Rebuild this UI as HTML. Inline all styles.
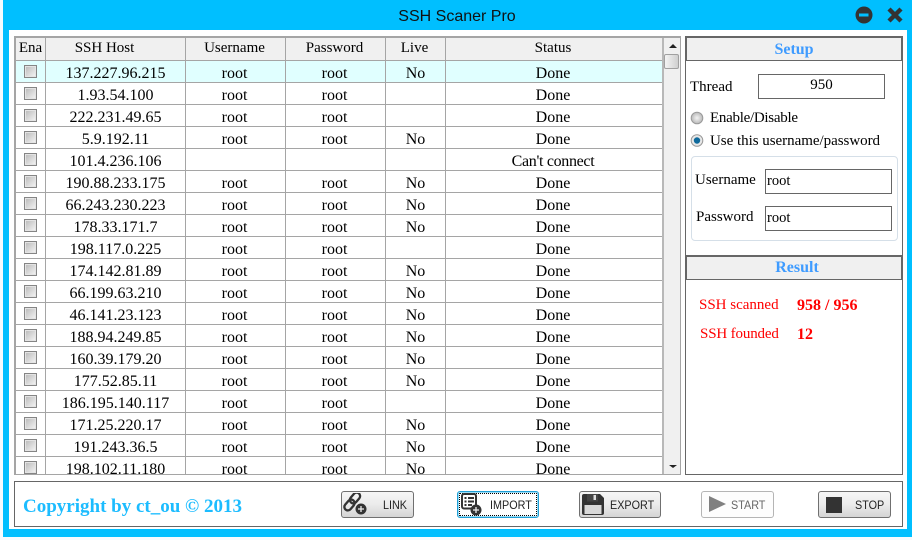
<!DOCTYPE html>
<html><head><meta charset="utf-8"><style>
html,body{margin:0;padding:0;width:912px;height:540px;overflow:hidden;background:#f4fbff}
*{box-sizing:border-box}
body{font-family:"Liberation Serif",serif;font-size:14px;color:#000;position:relative}
.a{position:absolute}
.t{position:absolute;white-space:nowrap;line-height:16px}
.c{text-align:center}
#win{left:3px;top:0;width:909px;height:537px;background:#00bfff}
#in{left:9px;top:30px;width:898px;height:499px;background:#fff}
.cell{position:absolute;text-align:center;line-height:16px;white-space:nowrap;overflow:hidden}
.r{position:absolute;left:0;width:665px;height:16px;font-size:16px}
.r div{position:absolute;top:0;height:16px;text-align:center;line-height:16px;white-space:nowrap}
.r .x{left:24px;width:13px;height:13px;border:1px solid #858585;background:linear-gradient(135deg,#b8b8b8,#f6f6f6);box-shadow:inset 0 0 0 1px #e4e4e4}
.h{left:46px;width:139px}.u{left:185px;width:99px}.p{left:285px;width:99px}.l{left:386px;width:59px}.s{left:446px;width:214px}
.hl{position:absolute;left:16px;width:646px;height:1px;background:#a5a5a5}
.vl{position:absolute;top:38px;width:1px;height:436px;background:#a5a5a5}
.btn{position:absolute;top:491px;height:27px;border:1px solid #707070;border-radius:3px;background:linear-gradient(#f6f6f6,#ebebeb 50%,#d4d4d4);font:12px "Liberation Sans",sans-serif;color:#222;line-height:25px}
.btn .t{transform:scaleX(.9);transform-origin:0 0}
</style></head><body>
<div class="a" id="win"></div><div class="a" id="in"></div>
<div class="t c" style="left:1px;width:912px;top:8px;font:16px/18px 'Liberation Sans',sans-serif;color:#111">SSH Scaner Pro</div>
<svg class="a" style="left:855px;top:6px" width="50" height="18" viewBox="0 0 50 18"><circle cx="9" cy="9" r="8.5" fill="#333"/><rect x="4" y="7.5" width="9.5" height="3" fill="#00bfff"/><path d="M34 3L46 15M46 3L34 15" stroke="#333" stroke-width="4.4"/></svg>

<!-- table -->
<div class="a" style="left:14px;top:36px;width:667px;height:439px;border:2px solid #a5a5a5;border-right:1px solid #a5a5a5;border-bottom:1px solid #a5a5a5"></div>
<div class="a" style="left:16px;top:38px;width:646px;height:22px;background:#f0f0f0"></div>
<div class="a" style="left:16px;top:61px;width:646px;height:21px;background:#e0ffff"></div>
<div class="a" style="left:664px;top:38px;width:16px;height:436px;background:#f0f0f0"></div>
<div class="a" style="left:664px;top:54px;width:15px;height:15px;border:1px solid #a0a0a0;border-radius:2px;background:linear-gradient(90deg,#f4f4f4,#cfcfcf)"></div>
<div class="a" style="left:669px;top:44px;border:4px solid transparent;border-top:0;border-bottom:4px solid #222"></div>
<div class="a" style="left:669px;top:465px;border:4px solid transparent;border-bottom:0;border-top:3px solid #222"></div>
<div class="a" style="left:662px;top:38px;width:2px;height:436px;background:#b8b8b8"></div>
<div class="vl" style="left:45px"></div><div class="vl" style="left:185px"></div><div class="vl" style="left:285px"></div><div class="vl" style="left:385px"></div><div class="vl" style="left:445px"></div>
<div class="hl" style="top:60px"></div><div class="hl" style="top:82px"></div><div class="hl" style="top:104px"></div><div class="hl" style="top:126px"></div><div class="hl" style="top:148px"></div><div class="hl" style="top:170px"></div><div class="hl" style="top:192px"></div><div class="hl" style="top:214px"></div><div class="hl" style="top:236px"></div><div class="hl" style="top:258px"></div><div class="hl" style="top:280px"></div><div class="hl" style="top:302px"></div><div class="hl" style="top:324px"></div><div class="hl" style="top:346px"></div><div class="hl" style="top:368px"></div><div class="hl" style="top:390px"></div><div class="hl" style="top:412px"></div><div class="hl" style="top:434px"></div><div class="hl" style="top:456px"></div>

<div style="font-size:15px">
<div class="cell" style="left:16px;width:29px;top:40px">Ena</div><div class="cell" style="left:46px;width:117px;top:40px">SSH Host</div><div class="cell" style="left:185px;width:99px;top:40px">Username</div><div class="cell" style="left:285px;width:99px;top:40px">Password</div><div class="cell" style="left:385px;width:59px;top:40px">Live</div><div class="cell" style="left:446px;width:214px;top:40px">Status</div>
</div>

<div class="r" style="top:66px"><div class="x" style="top:-1px"></div><div class="h">137.227.96.215</div><div class="u">root</div><div class="p">root</div><div class="l">No</div><div class="s">Done</div></div>
<div class="r" style="top:88px"><div class="x" style="top:-1px"></div><div class="h">1.93.54.100</div><div class="u">root</div><div class="p">root</div><div class="s">Done</div></div>
<div class="r" style="top:110px"><div class="x" style="top:-1px"></div><div class="h">222.231.49.65</div><div class="u">root</div><div class="p">root</div><div class="s">Done</div></div>
<div class="r" style="top:132px"><div class="x" style="top:-1px"></div><div class="h">5.9.192.11</div><div class="u">root</div><div class="p">root</div><div class="l">No</div><div class="s">Done</div></div>
<div class="r" style="top:154px"><div class="x" style="top:-1px"></div><div class="h">101.4.236.106</div><div class="s" style="letter-spacing:-.32px">Can't connect</div></div>
<div class="r" style="top:176px"><div class="x" style="top:-1px"></div><div class="h">190.88.233.175</div><div class="u">root</div><div class="p">root</div><div class="l">No</div><div class="s">Done</div></div>
<div class="r" style="top:198px"><div class="x" style="top:-1px"></div><div class="h">66.243.230.223</div><div class="u">root</div><div class="p">root</div><div class="l">No</div><div class="s">Done</div></div>
<div class="r" style="top:220px"><div class="x" style="top:-1px"></div><div class="h">178.33.171.7</div><div class="u">root</div><div class="p">root</div><div class="l">No</div><div class="s">Done</div></div>
<div class="r" style="top:242px"><div class="x" style="top:-1px"></div><div class="h">198.117.0.225</div><div class="u">root</div><div class="p">root</div><div class="s">Done</div></div>
<div class="r" style="top:264px"><div class="x" style="top:-1px"></div><div class="h">174.142.81.89</div><div class="u">root</div><div class="p">root</div><div class="l">No</div><div class="s">Done</div></div>
<div class="r" style="top:286px"><div class="x" style="top:-1px"></div><div class="h">66.199.63.210</div><div class="u">root</div><div class="p">root</div><div class="l">No</div><div class="s">Done</div></div>
<div class="r" style="top:308px"><div class="x" style="top:-1px"></div><div class="h">46.141.23.123</div><div class="u">root</div><div class="p">root</div><div class="l">No</div><div class="s">Done</div></div>
<div class="r" style="top:330px"><div class="x" style="top:-1px"></div><div class="h">188.94.249.85</div><div class="u">root</div><div class="p">root</div><div class="l">No</div><div class="s">Done</div></div>
<div class="r" style="top:352px"><div class="x" style="top:-1px"></div><div class="h">160.39.179.20</div><div class="u">root</div><div class="p">root</div><div class="l">No</div><div class="s">Done</div></div>
<div class="r" style="top:374px"><div class="x" style="top:-1px"></div><div class="h">177.52.85.11</div><div class="u">root</div><div class="p">root</div><div class="l">No</div><div class="s">Done</div></div>
<div class="r" style="top:396px"><div class="x" style="top:-1px"></div><div class="h">186.195.140.117</div><div class="u">root</div><div class="p">root</div><div class="s">Done</div></div>
<div class="r" style="top:418px"><div class="x" style="top:-1px"></div><div class="h">171.25.220.17</div><div class="u">root</div><div class="p">root</div><div class="l">No</div><div class="s">Done</div></div>
<div class="r" style="top:440px"><div class="x" style="top:-1px"></div><div class="h">191.243.36.5</div><div class="u">root</div><div class="p">root</div><div class="l">No</div><div class="s">Done</div></div>
<div class="a" style="left:0;top:461px;width:662px;height:13px;overflow:hidden"><div class="r" style="top:1px"><div class="x" style="top:-1px"></div><div class="h">198.102.11.180</div><div class="u">root</div><div class="p">root</div><div class="l">No</div><div class="s">Done</div></div></div>

<!-- right panel -->
<div class="a" style="left:685px;top:36px;width:218px;height:439px;border:1px solid #666"></div>
<div class="a" style="left:685px;top:36px;width:218px;height:25px;background:#f0f0f0;border:2px solid #666;border-bottom:1px solid #666"></div>
<div class="t c" style="left:685px;width:218px;top:42px;font-weight:bold;font-size:16px;color:#3e9bff">Setup</div>
<div class="t" style="left:690px;top:79px;font-size:15px">Thread</div>
<div class="a" style="left:758px;top:74px;width:127px;height:25px;border:1px solid #666"></div>
<div class="t c" style="left:758px;width:127px;top:77px;font-size:15px">950</div>
<svg class="a" style="left:690px;top:110px" width="14" height="38" viewBox="0 0 14 38"><defs><radialGradient id="g1"><stop offset="0" stop-color="#f4f4f4"/><stop offset="1" stop-color="#b8b8b8"/></radialGradient></defs><circle cx="7" cy="8" r="5.8" fill="url(#g1)" stroke="#999"/><circle cx="7" cy="30.5" r="5.8" fill="#e8e8e8" stroke="#999"/><circle cx="7" cy="30.5" r="3.2" fill="#0f6a9c"/></svg>
<div class="t" style="left:710px;top:110px;font-size:15px;letter-spacing:-.28px">Enable/Disable</div>
<div class="t" style="left:710px;top:133px;font-size:15px;letter-spacing:-.03px">Use this username/password</div>
<div class="a" style="left:691px;top:156px;width:207px;height:85px;border:1px solid #d5dfe8;border-radius:4px"></div>
<div class="t" style="left:695px;top:172px;font-size:15px">Username</div>
<div class="t" style="left:696px;top:209px;font-size:15px">Password</div>
<div class="a" style="left:765px;top:169px;width:127px;height:25px;border:1px solid #666"></div>
<div class="a" style="left:765px;top:206px;width:127px;height:25px;border:1px solid #666"></div>
<div class="t" style="left:767px;top:173px;font-size:14.5px">root</div>
<div class="t" style="left:767px;top:210px;font-size:14.5px">root</div>
<div class="a" style="left:685px;top:255px;width:218px;height:25px;background:#f0f0f0;border:1px solid #666;border-top-width:2px;border-right-width:2px;border-left-width:2px"></div>
<div class="t c" style="left:688px;width:218px;top:260px;font-weight:bold;font-size:16px;color:#3e9bff">Result</div>
<div class="t" style="left:699px;top:297px;color:#f00;font-size:15px">SSH scanned</div>
<div class="t" style="left:797px;top:298px;color:#f00;font-weight:bold;font-size:16px">958 / 956</div>
<div class="t" style="left:700px;top:326px;color:#f00;font-size:15px;letter-spacing:-.15px">SSH founded</div>
<div class="t" style="left:797px;top:327px;color:#f00;font-weight:bold;font-size:16px">12</div>

<!-- bottom -->
<div class="a" style="left:14px;top:481px;width:889px;height:46px;border:1px solid #666"></div>
<div class="t" style="left:23px;top:497px;font-weight:bold;font-size:19px;line-height:19px;color:#1cbcff">Copyright by ct_ou © 2013</div>

<div class="btn" style="left:341px;width:73px"><svg class="a" style="left:1px;top:1px" width="26" height="24" viewBox="0 0 26 24"><g fill="none" stroke="#333" stroke-width="2.3"><rect x="6" y="1.5" width="12" height="7" rx="3.5" transform="rotate(-50 12 5)"/><rect x="0.5" y="8.5" width="12" height="7" rx="3.5" transform="rotate(-50 6.5 12)"/></g><circle cx="18" cy="16" r="5.5" fill="#333"/><path d="M15 16h6M18 13v6" stroke="#eee" stroke-width="1.3"/></svg><span class="t" style="left:41px;top:5px">LINK</span></div>
<div class="btn" style="left:457px;width:82px;background:#fff;border:1px solid #1f9fd6;box-shadow:inset 0 0 0 1px #9adcf5;outline:1px dotted #000;outline-offset:-3px"><svg class="a" style="left:1px;top:1px" width="26" height="24" viewBox="0 0 26 24"><rect x="3" y="1" width="14" height="14.5" rx="2" fill="none" stroke="#333" stroke-width="2"/><path d="M5.5 5h2M9 5h6M5.5 8.5h2M9 8.5h6M5.5 12h2M9 12h4" stroke="#333" stroke-width="2"/><circle cx="17" cy="17" r="5.5" fill="#333"/><path d="M14 17h6M17 14v6" stroke="#eee" stroke-width="1.3"/></svg><span class="t" style="left:32px;top:5px">IMPORT</span></div>
<div class="btn" style="left:579px;width:82px"><svg class="a" style="left:1px;top:0" width="26" height="24" viewBox="0 0 26 24"><path d="M3 2h16l4 4v15a2 2 0 0 1-2 2H3a2 2 0 0 1-2-2V4a2 2 0 0 1 2-2z" fill="#333"/><rect x="3.5" y="13" width="17" height="9" fill="#d8d8d8"/><rect x="6" y="2" width="11" height="7.5" fill="#444"/><rect x="12.5" y="3" width="2.5" height="5" fill="#ddd"/></svg><span class="t" style="left:30px;top:5px">EXPORT</span></div>
<div class="btn" style="left:701px;width:73px;border-color:#b5b5b5;background:#fdfdfd;color:#666"><svg class="a" style="left:6px;top:3px" width="18" height="18" viewBox="0 0 18 18"><path d="M1 1L18 9L1 17z" fill="#808080"/></svg><span class="t" style="left:29px;top:5px">START</span></div>
<div class="btn" style="left:818px;width:73px"><div class="a" style="left:7px;top:5px;width:16px;height:16px;background:#333"></div><span class="t" style="left:36px;top:5px">STOP</span></div>
</body></html>
